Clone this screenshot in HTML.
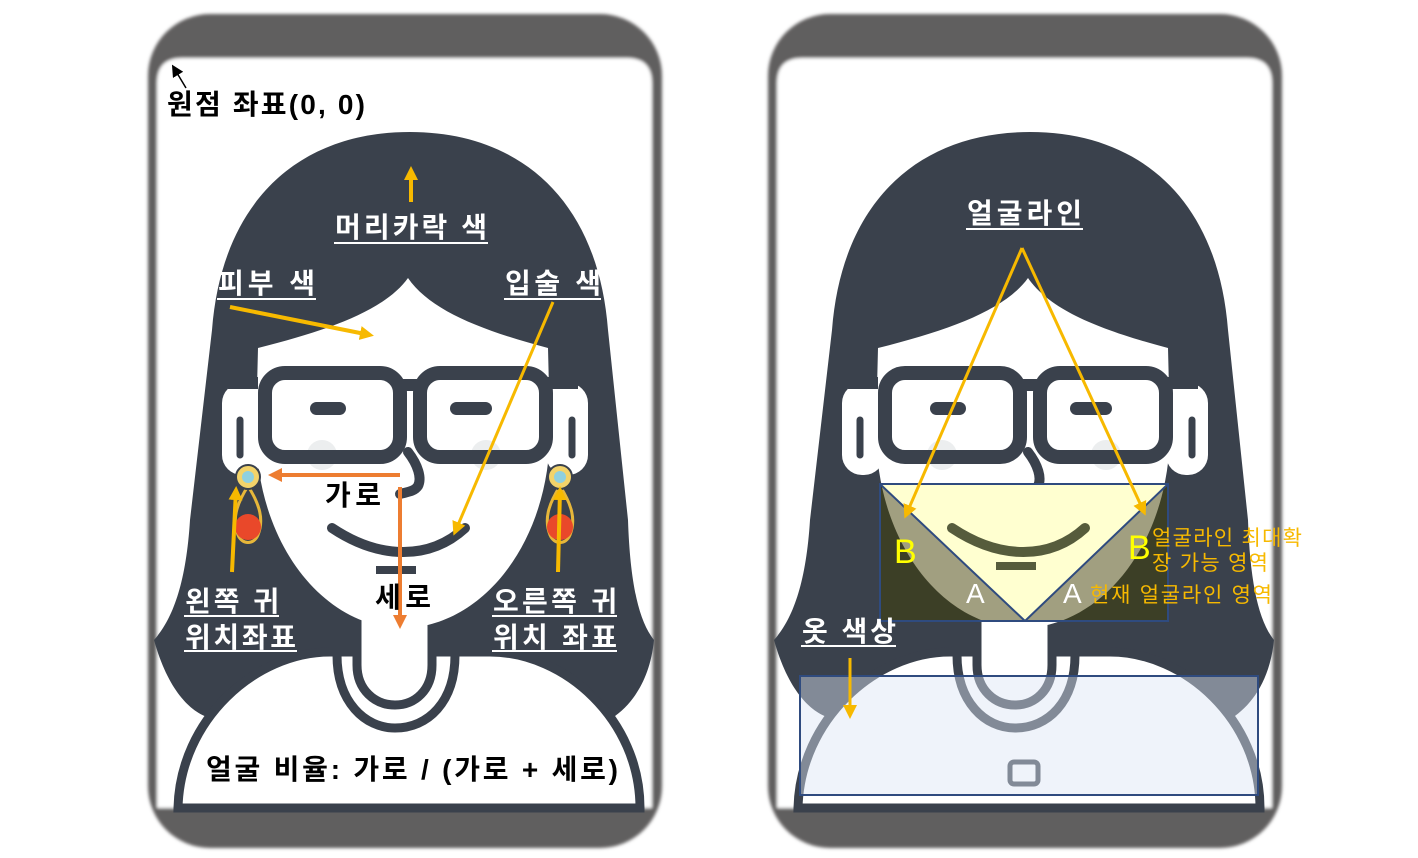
<!DOCTYPE html>
<html><head><meta charset="utf-8"><style>
html,body{margin:0;padding:0;background:#fff;}
svg{display:block}
text{font-family:"Liberation Sans","Noto Sans CJK KR",sans-serif;}
.lb{font-size:28px;font-weight:bold;fill:#fff;}
.bk{font-size:28px;font-weight:bold;fill:#000;}
</style></head><body>
<svg width="1418" height="858" viewBox="0 0 1418 858" xmlns="http://www.w3.org/2000/svg">
<defs>
<filter id="bl" x="-5%" y="-5%" width="110%" height="110%"><feGaussianBlur stdDeviation="1.6"/></filter>
<marker id="ayb" markerWidth="14" markerHeight="14" refX="10" refY="7" orient="auto" markerUnits="userSpaceOnUse"><path d="M0,0 L14,7 L0,14 Z" fill="#f7b900"/></marker>
<marker id="ao" markerWidth="14" markerHeight="14" refX="10" refY="7" orient="auto" markerUnits="userSpaceOnUse"><path d="M0,0 L14,7 L0,14 Z" fill="#ed7d31"/></marker>
<marker id="ak" markerWidth="12" markerHeight="12" refX="8" refY="6" orient="auto" markerUnits="userSpaceOnUse"><path d="M0,0 L12,6 L0,12 Z" fill="#000"/></marker>
<g id="phone">
 <g filter="url(#bl)">
  <rect x="148" y="14" width="514" height="834" rx="62" fill="#615e5f"/>
  <path d="M182,58 L627,58 Q652,58 652,83 L652,808 L157,808 L157,83 Q157,58 182,58 Z" fill="#fff"/>
 </g>
 <path d="M410,132 C300,132 222,200 212,330 L190,520 C186,585 172,620 154,640 C168,690 190,712 210,718 L612,718 C632,705 650,680 654,640 C638,620 630,580 628,520 L608,330 C598,200 520,132 410,132 Z" fill="#3a414c"/>
 <path d="M178,808 C180,720 255,652 330,652 L490,652 C565,652 640,720 640,808 Z" fill="#fff" stroke="#3a414c" stroke-width="9"/>
 <path d="M357,600 L357,665 C357,690 375,705 395,705 C415,705 432,690 432,665 L432,600 Z" fill="#fff" stroke="#3a414c" stroke-width="9"/>
 <path d="M337,655 C337,702 365,728 395,728 C428,728 455,702 455,655" fill="none" stroke="#3a414c" stroke-width="9"/>
 <rect x="222" y="383" width="42" height="92" rx="20" fill="#fff"/>
 <rect x="546" y="383" width="42" height="92" rx="20" fill="#fff"/>
 <path d="M240,420 L240,455" stroke="#3a414c" stroke-width="7" stroke-linecap="round"/>
 <path d="M572,420 L572,455" stroke="#3a414c" stroke-width="7" stroke-linecap="round"/>
 <path d="M258,348 C330,330 385,310 408,278 C430,310 480,330 548,348 L550,430 C550,545 480,628 402,628 C325,628 256,545 256,430 Z" fill="#fff"/>
 <circle cx="322" cy="455" r="15" fill="#eceeef"/>
 <circle cx="486" cy="455" r="15" fill="#eceeef"/>
 <rect x="265" y="373" width="135" height="84" rx="20" fill="none" stroke="#3a414c" stroke-width="14"/>
 <rect x="420" y="373" width="126" height="84" rx="20" fill="none" stroke="#3a414c" stroke-width="14"/>
 <path d="M400,385 L420,385 M258,383 L228,383 M546,383 L578,383" stroke="#3a414c" stroke-width="12"/>
 <rect x="310" y="402" width="36" height="13" rx="6.5" fill="#3a414c"/>
 <rect x="450" y="402" width="42" height="13" rx="6.5" fill="#3a414c"/>
 <path d="M408,452 C418,465 422,478 418,486 C414,492 406,492 400,494" fill="none" stroke="#3a414c" stroke-width="10" stroke-linecap="round"/>
 <path d="M332,528 C380,560 430,560 465,528" fill="none" stroke="#3a414c" stroke-width="10" stroke-linecap="round"/>
 <rect x="376" y="566" width="40" height="8" fill="#3a414c"/>
</g>
<g id="earr">
 <path d="M248,486 C236,505 232,520 238,535 C242,545 254,545 258,535 C264,520 260,505 248,486 Z" fill="none" stroke="#e7b73a" stroke-width="3"/>
 <circle cx="248" cy="527" r="13" fill="#e9482a"/>
 <circle cx="248" cy="477" r="12" fill="#f3d36a" stroke="#3a414c" stroke-width="2"/>
 <circle cx="248" cy="477" r="6" fill="#8fd0e0"/>
</g>
</defs>

<use href="#phone"/>
<use href="#earr"/>
<use href="#earr" x="312"/>
<use href="#phone" x="620"/>
<rect x="1010" y="762" width="28" height="22" rx="4" fill="none" stroke="#3a414c" stroke-width="5"/>

<line x1="186" y1="88" x2="174" y2="68" stroke="#000" stroke-width="1.5" marker-end="url(#ak)"/>
<text class="bk" x="167" y="114" textLength="198">원점 좌표(0, 0)</text>
<line x1="411" y1="202" x2="411" y2="170" stroke="#f7b900" stroke-width="4" marker-end="url(#ayb)"/>
<text class="lb" x="335" y="237" textLength="152">머리카락 색</text>
<line x1="334" y1="243" x2="488" y2="243" stroke="#fff" stroke-width="2"/>
<text class="lb" x="218" y="293" textLength="97">피부 색</text>
<line x1="217" y1="299" x2="316" y2="299" stroke="#fff" stroke-width="2"/>
<line x1="230" y1="307" x2="370" y2="335" stroke="#f7b900" stroke-width="4" marker-end="url(#ayb)"/>
<text class="lb" x="505" y="293" textLength="96">입술 색</text>
<line x1="504" y1="299" x2="601" y2="299" stroke="#fff" stroke-width="2"/>
<line x1="553" y1="302" x2="455" y2="532" stroke="#f7b900" stroke-width="3" marker-end="url(#ayb)"/>
<line x1="400" y1="475" x2="272" y2="475" stroke="#ed7d31" stroke-width="4" marker-end="url(#ao)"/>
<line x1="400" y1="487" x2="400" y2="625" stroke="#ed7d31" stroke-width="4" marker-end="url(#ao)"/>
<text class="bk" x="325" y="505" textLength="56">가로</text>
<text class="bk" x="375" y="607" textLength="56">세로</text>
<line x1="232" y1="572" x2="236" y2="490" stroke="#f7b900" stroke-width="4" marker-end="url(#ayb)"/>
<line x1="558" y1="572" x2="560" y2="490" stroke="#f7b900" stroke-width="4" marker-end="url(#ayb)"/>
<text class="lb" x="185" y="611" textLength="94">왼쪽 귀</text>
<line x1="184" y1="616" x2="279" y2="616" stroke="#fff" stroke-width="2"/>
<text class="lb" x="185" y="647" textLength="111">위치좌표</text>
<line x1="184" y1="651" x2="297" y2="651" stroke="#fff" stroke-width="2"/>
<text class="lb" x="493" y="611" textLength="124">오른쪽 귀</text>
<line x1="492" y1="616" x2="617" y2="616" stroke="#fff" stroke-width="2"/>
<text class="lb" x="493" y="647" textLength="124">위치 좌표</text>
<line x1="492" y1="651" x2="617" y2="651" stroke="#fff" stroke-width="2"/>
<text class="bk" x="206" y="779" textLength="412">얼굴 비율: 가로 / (가로 + 세로)</text>

<clipPath id="rc"><rect x="880" y="484" width="288" height="137"/></clipPath>
<g clip-path="url(#rc)">
 <rect x="880" y="484" width="288" height="137" fill="#3c3f26"/>
 <path d="M876,348 L1168,348 L1170,430 C1170,545 1100,628 1022,628 C945,628 876,545 876,430 Z" fill="#a19f80"/>
 <polygon points="880,484 1168,484 1025,621" fill="#ffffd0"/>
 <path d="M952,528 C1000,560 1050,560 1085,528" fill="none" stroke="#565c3c" stroke-width="10" stroke-linecap="round"/>
 <rect x="996" y="562" width="40" height="8" fill="#565c3c"/>
 <polygon points="880,484 1168,484 1025,621" fill="none" stroke="#2f4b7f" stroke-width="2"/>
</g>
<rect x="880" y="484" width="288" height="137" fill="none" stroke="#2f4b7f" stroke-width="2"/>
<rect x="800" y="676" width="458" height="119" fill="#dbe5f5" fill-opacity="0.45" stroke="#2f4b7f" stroke-width="2"/>
<text class="lb" x="967" y="223" textLength="115">얼굴라인</text>
<line x1="966" y1="229" x2="1083" y2="229" stroke="#fff" stroke-width="2"/>
<line x1="1022" y1="248" x2="906" y2="515" stroke="#f7b900" stroke-width="3" marker-end="url(#ayb)"/>
<line x1="1022" y1="248" x2="1144" y2="512" stroke="#f7b900" stroke-width="3" marker-end="url(#ayb)"/>
<text x="894" y="563" font-size="34" fill="#ffff00">B</text>
<text x="1128" y="559" font-size="34" fill="#ffff00">B</text>
<text x="966" y="603" font-size="28" fill="#fff">A</text>
<text x="1063" y="603" font-size="28" fill="#fff">A</text>
<text x="1152" y="545" font-size="21" fill="#f7b900" textLength="150">얼굴라인 최대확</text>
<text x="1152" y="570" font-size="21" fill="#f7b900" textLength="116">장 가능 영역</text>
<text x="1090" y="602" font-size="21" fill="#f7b900" textLength="182">현재 얼굴라인 영역</text>
<text class="lb" x="802" y="641" textLength="94">옷 색상</text>
<line x1="801" y1="646" x2="896" y2="646" stroke="#fff" stroke-width="2"/>
<line x1="850" y1="658" x2="850" y2="715" stroke="#f7b900" stroke-width="3" marker-end="url(#ayb)"/>
</svg>
</body></html>
